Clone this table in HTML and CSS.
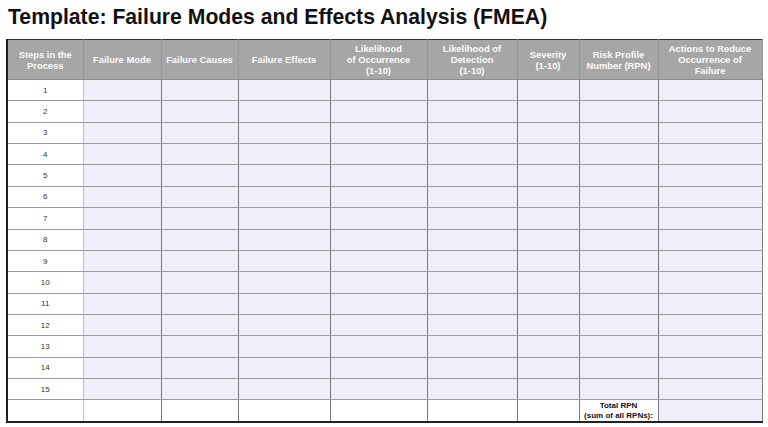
FILE: index.html
```html
<!DOCTYPE html>
<html lang="en">
<head>
<meta charset="utf-8">
<title>FMEA Template</title>
<link rel="stylesheet" href="styles.css">
</head>
<body>
<h1 class="title">Template: Failure Modes and Effects Analysis (FMEA)</h1>
<table class="fmea">
  <colgroup>
    <col class="c1"><col class="c2"><col class="c3"><col class="c4"><col class="c5">
    <col class="c6"><col class="c7"><col class="c8"><col class="c9">
  </colgroup>
  <thead>
    <tr>
      <th>Steps in the<br>Process</th>
      <th>Failure Mode</th>
      <th>Failure Causes</th>
      <th>Failure Effects</th>
      <th>Likelihood<br>of Occurrence<br>(1-10)</th>
      <th>Likelihood of<br>Detection<br>(1-10)</th>
      <th>Severity<br>(1-10)</th>
      <th>Risk Profile<br>Number (RPN)</th>
      <th>Actions to Reduce<br>Occurrence of<br>Failure</th>
    </tr>
  </thead>
  <tbody>
    <tr><td class="num">1</td><td></td><td></td><td></td><td></td><td></td><td></td><td></td><td></td></tr>
    <tr><td class="num">2</td><td></td><td></td><td></td><td></td><td></td><td></td><td></td><td></td></tr>
    <tr><td class="num">3</td><td></td><td></td><td></td><td></td><td></td><td></td><td></td><td></td></tr>
    <tr><td class="num">4</td><td></td><td></td><td></td><td></td><td></td><td></td><td></td><td></td></tr>
    <tr><td class="num">5</td><td></td><td></td><td></td><td></td><td></td><td></td><td></td><td></td></tr>
    <tr><td class="num">6</td><td></td><td></td><td></td><td></td><td></td><td></td><td></td><td></td></tr>
    <tr><td class="num">7</td><td></td><td></td><td></td><td></td><td></td><td></td><td></td><td></td></tr>
    <tr><td class="num">8</td><td></td><td></td><td></td><td></td><td></td><td></td><td></td><td></td></tr>
    <tr><td class="num">9</td><td></td><td></td><td></td><td></td><td></td><td></td><td></td><td></td></tr>
    <tr><td class="num">10</td><td></td><td></td><td></td><td></td><td></td><td></td><td></td><td></td></tr>
    <tr><td class="num">11</td><td></td><td></td><td></td><td></td><td></td><td></td><td></td><td></td></tr>
    <tr><td class="num">12</td><td></td><td></td><td></td><td></td><td></td><td></td><td></td><td></td></tr>
    <tr><td class="num">13</td><td></td><td></td><td></td><td></td><td></td><td></td><td></td><td></td></tr>
    <tr><td class="num">14</td><td></td><td></td><td></td><td></td><td></td><td></td><td></td><td></td></tr>
    <tr><td class="num">15</td><td></td><td></td><td></td><td></td><td></td><td></td><td></td><td></td></tr>
    <tr class="total">
      <td class="num"></td><td class="blank"></td><td class="blank"></td><td class="blank"></td><td class="blank"></td><td class="blank"></td><td class="blank"></td>
      <td class="label">Total RPN<br>(sum of all RPNs):</td>
      <td></td>
    </tr>
  </tbody>
</table>
</body>
</html>
```
FILE: styles.css
```css
html, body {
  margin: 0;
  padding: 0;
  background: #ffffff;
}

body {
  font-family: "Liberation Sans", Arial, sans-serif;
  color: #222;
}

.title {
  margin: 5px 0 0 8px;
  font-size: 21.2px;
  line-height: 24px;
  font-weight: bold;
  color: #111;
}

.fmea {
  margin: 10px 0 0 6px;
  border-collapse: collapse;
  table-layout: fixed;
  width: 755px;
  border-top: 1px solid #333;
  border-left: 2px solid #222;
  border-right: 1px solid #333;
  border-bottom: 2px solid #222;
}

.c1 { width: 76px; }
.c2 { width: 78px; }
.c3 { width: 77px; }
.c4 { width: 92px; }
.c5 { width: 97px; }
.c6 { width: 90px; }
.c7 { width: 62px; }
.c8 { width: 79px; }
.c9 { width: 104px; }

.fmea th {
  height: 39px;
  padding: 0 1px;
  background: #a6a6a6;
  color: #fbfbfb;
  font-size: 9.4px;
  line-height: 11px;
  font-weight: bold;
  text-align: center;
  vertical-align: middle;
  white-space: nowrap;
  border-left: 1px solid #979797;
  border-right: 1px solid #979797;
  border-bottom: 1px solid #8a8a8a;
}

.fmea td {
  height: 20.36px;
  padding: 0;
  background: #efeffa;
  border-left: 1px solid #7a7a7a;
  border-right: 1px solid #7a7a7a;
  border-bottom: 1px solid #9c9c9c;
  font-size: 8px;
  text-align: center;
  vertical-align: middle;
}

.fmea td.num {
  background: #ffffff;
  color: #333;
  border-right: 1px solid #c4c4c4;
}

.fmea td.blank,
.fmea td.label {
  background: #ffffff;
}

.fmea .total td {
  height: 21px;
}

.fmea td.label {
  font-size: 8px;
  line-height: 9.5px;
  font-weight: bold;
  color: #111;
  vertical-align: middle;
  padding: 0;
}
```
